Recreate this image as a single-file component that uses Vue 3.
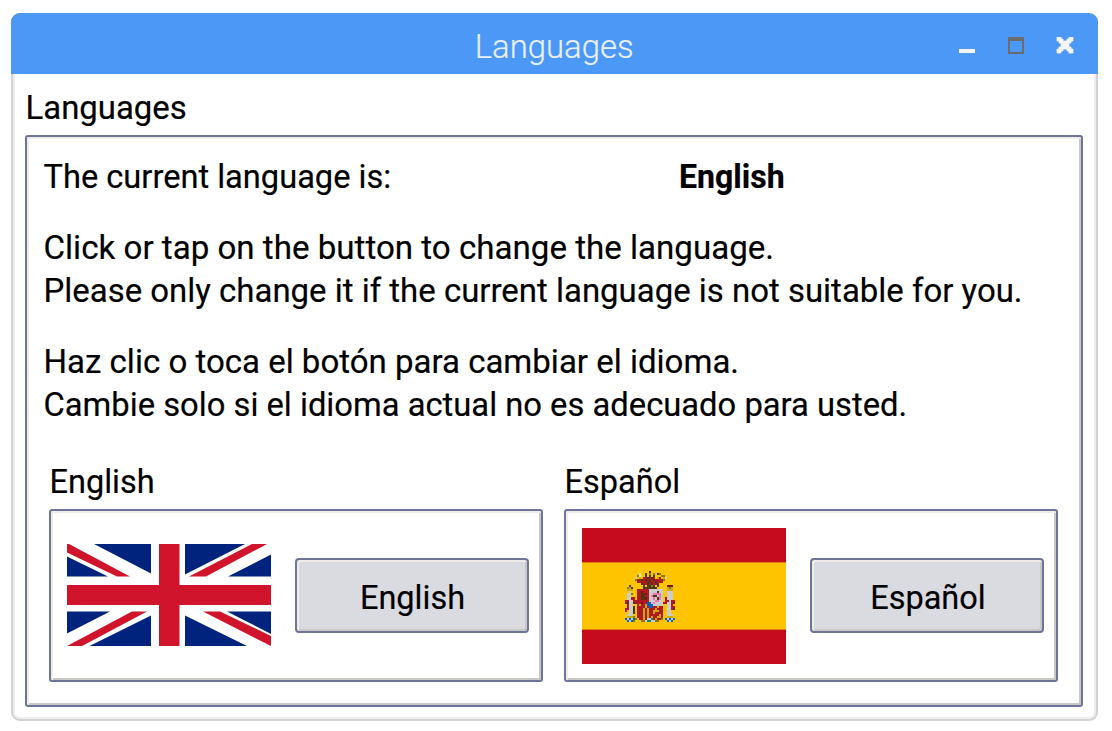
<script setup>
const palette = {
  k: '#4a3a0c', r: '#b01a20', d: '#781818', w: '#cccccc', p: '#f070b0',
  b: '#0b5cbf', y: '#c8ac00', g: '#168a78', o: '#8d7a08', l: '#e8e8d0',
}
const arms = [
  '............k............',
  '.......l..k.o.o.ko.......',
  '......ol..k.k.k...oo.....',
  '.....w.y.rrkrkr.yr.yw....',
  '.....orrkrdrkrdrrrro.....',
  '......rrrrrkkrrkrrr......',
  '........krrkrkrrk........',
  '..k......k.kkok.k....ddd.',
  '.oyk.....kkkkkkk.....yoy.',
  '.yyy..rrrrrrwwwwwww..yyy.',
  '..w...rrdrrrwwwwkww..www.',
  '.wwo..rrkkdrwwppppw..www.',
  '.ww...rrdkrrwpkkwpw..www.',
  '.wwrr.rrkkdrwwpwkpw.rwww.',
  'rrwwrrrrrrrrwwwppww.rrwrr',
  'rkwwkrrrdrrbbwpwwwwrrwwrd',
  '.rww..ryrrybbbwwwww..wwr.',
  '.rwwk.rrrryrbbrryrr..wwrr',
  'rrwwk.rrryryrrryrrr..wwrk',
  'r.wwk.rrryryrryyyrr..ww..',
  '..wwk.rrryryrryrrrr..ww..',
  '.www..rrryryrrrrryr..www.',
  '.yyyo.rrryryryrryyr..yyy.',
  'bwbwbo.rryrwwgryrro.bwbwb',
  '.bwbo...oowggwwoo....bwb.',
]
const cells = arms.flatMap((row, y) =>
  [...row].map((c, x) => ({ x, y, fill: palette[c] })).filter((c) => c.fill))
</script>

<template>
  <main class="window">
    <header class="titlebar">
      <span class="title">Languages</span>
      <svg class="controls" width="120" height="20" viewBox="0 0 120 20" shape-rendering="crispEdges">
        <path d="M3 12h16v4H3z" fill="#f4f4f4" />
        <path d="M52 0h16v17H52zM54 4v11h12V4z" fill="#6c6c6c" fill-rule="evenodd" />
        <path d="M101 0h4v2h2v2h4V2h2V0h4v4h-2v2h-2v4h2v2h2v4h-4v-2h-2v-2h-4v2h-2v2h-4v-4h2v-2h2V6h-2V4h-2z" fill="#f4f4f4" stroke="#f4f4f4" stroke-width=".8" shape-rendering="auto" />
      </svg>
    </header>
    <section class="body">
      <h1 class="label"><span class="t heading">Languages</span></h1>
      <div class="frame outer">
        <div class="current"><span class="prompt"><span class="t l0">The current language is:</span></span><b class="t">English</b></div>
        <p><span class="t l1">Click or tap on the button to change the language.</span><br><span class="t l2">Please only change it if the current language is not suitable for you.</span></p>
        <p><span class="t l3">Haz clic o toca el botón para cambiar el idioma.</span><br><span class="t l4">Cambie solo si el idioma actual no es adecuado para usted.</span></p>
        <div class="choices">
          <div class="choice">
            <h2 class="label"><span class="t name">English</span></h2>
            <div class="frame box">
              <svg class="flag uk" width="204" height="102" viewBox="0 0 204 102">
                <path d="M0 0h204v102H0z" fill="#fff" />
                <path d="M27 0h57v29.500zM118 0h60L118 30.500zM204 10.500V32.500H161zM0 12.500L41 32.500H0zM0 67.500h43L0 89.500zM84 71.500V102H22.500zM118 71.500L180 102H118zM160 67.500h44V90z" fill="#00247d" />
                <path d="M0 0h2L63 32.500H50L0 8.500zM185 0h15L139 32.500H122zM65 67.500h15L15 102H0zM136 67.500h17L204 92v10z" fill="#cf142b" />
                <path d="M92 0h20.500v102H92zM0 41h204v20H0z" fill="#cf142b" />
              </svg>
              <button><span class="t name">English</span></button>
            </div>
          </div>
          <div class="choice">
            <h2 class="label"><span class="t name">Español</span></h2>
            <div class="frame box">
              <svg class="flag spain" width="204" height="136" viewBox="0 0 204 136">
                <path d="M0 0h204v136H0z" fill="#c60b1e" />
                <path d="M0 34h204v68H0z" fill="#ffc400" />
                <path d="M0 34h204v1H0zM0 101h204v1H0z" fill="#e07c0c" />
                <g transform="translate(42.500 43) scale(2.036)" shape-rendering="crispEdges">
                  <rect v-for="c in cells" :key="`${c.x}-${c.y}`" :x="c.x" :y="c.y" width="1" height="1" :fill="c.fill" />
                </g>
              </svg>
              <button><span class="t name">Español</span></button>
            </div>
          </div>
        </div>
      </div>
    </section>
  </main>
</template>

<style>
body { background: #fff; }
</style>

<style scoped>
* { box-sizing: border-box; }
.window {
  width: 1087px; height: 708px; margin: 13px 0 0 11px;
  border-radius: 9px; overflow: hidden;
  font-family: Roboto, "Liberation Sans", sans-serif; font-size: 34px; line-height: 43px; color: #000;
  box-shadow: inset 0 0 0 2px #d2d2d2, inset 0 0 0 4px #eeeeee;
}
.titlebar { height: 61px; background: #4c98f6; display: flex; align-items: center; justify-content: center; position: relative; }
.title { color: #eaf1fc; font-weight: 300; padding-top: 6px; transform: scaleX(.967); -webkit-text-stroke: .2px #eaf1fc; }
.controls { position: absolute; right: 22px; top: 24px; }
.body { padding: 12px 14px 0; }
.label { margin: 0; font-size: 34px; font-weight: 400; height: 49px; }
.t { display: inline-block; transform-origin: 0 50%; white-space: nowrap; -webkit-text-stroke: .2px #000; }
.heading { transform: translateX(.5px) scaleX(.968); }
.l0 { transform: translateX(.5px) scaleX(.959); }
.l1 { transform: translateX(.5px) scaleX(.974); }
.l2 { transform: translateX(.5px) scaleX(.969); }
.l3 { transform: translateX(.5px) scaleX(.971); }
.l4 { transform: translateX(.5px) scaleX(.963); }
.name { transform: translateX(.5px) scaleX(.956); }
b.t { transform: scaleX(.942); }
.frame {
  border: 2px solid #6e7499; border-radius: 3px;
  box-shadow: inset 2px 2px #efebe7, inset -2px -2px #c9c8c5;
}
.outer { width: 1058px; height: 572px; padding: 18px 16px 0; }
.current { display: flex; height: 43px; }
.prompt { width: 636px; }
p { margin: 28px 0 0; white-space: nowrap; }
.choices { display: flex; gap: 21px; margin: 34px 0 0 6px; }
.choice { width: 494px; }
.box { height: 173px; display: flex; align-items: center; padding: 0 12px 0 16px; justify-content: space-between; }
.flag { display: block; }
.uk { margin-bottom: 1px; }
.spain { margin-top: 1px; }
button {
  width: 234px; height: 75px; padding: 3px 0 0; font: inherit; color: #000;
  background: #dadbe0; border: 2px solid #6e7499; border-radius: 4px;
  box-shadow: inset 2px 2px #efebe7, inset -2px -2px #c9c8c5;
}
button .t { transform-origin: 50% 50%; }
</style>
